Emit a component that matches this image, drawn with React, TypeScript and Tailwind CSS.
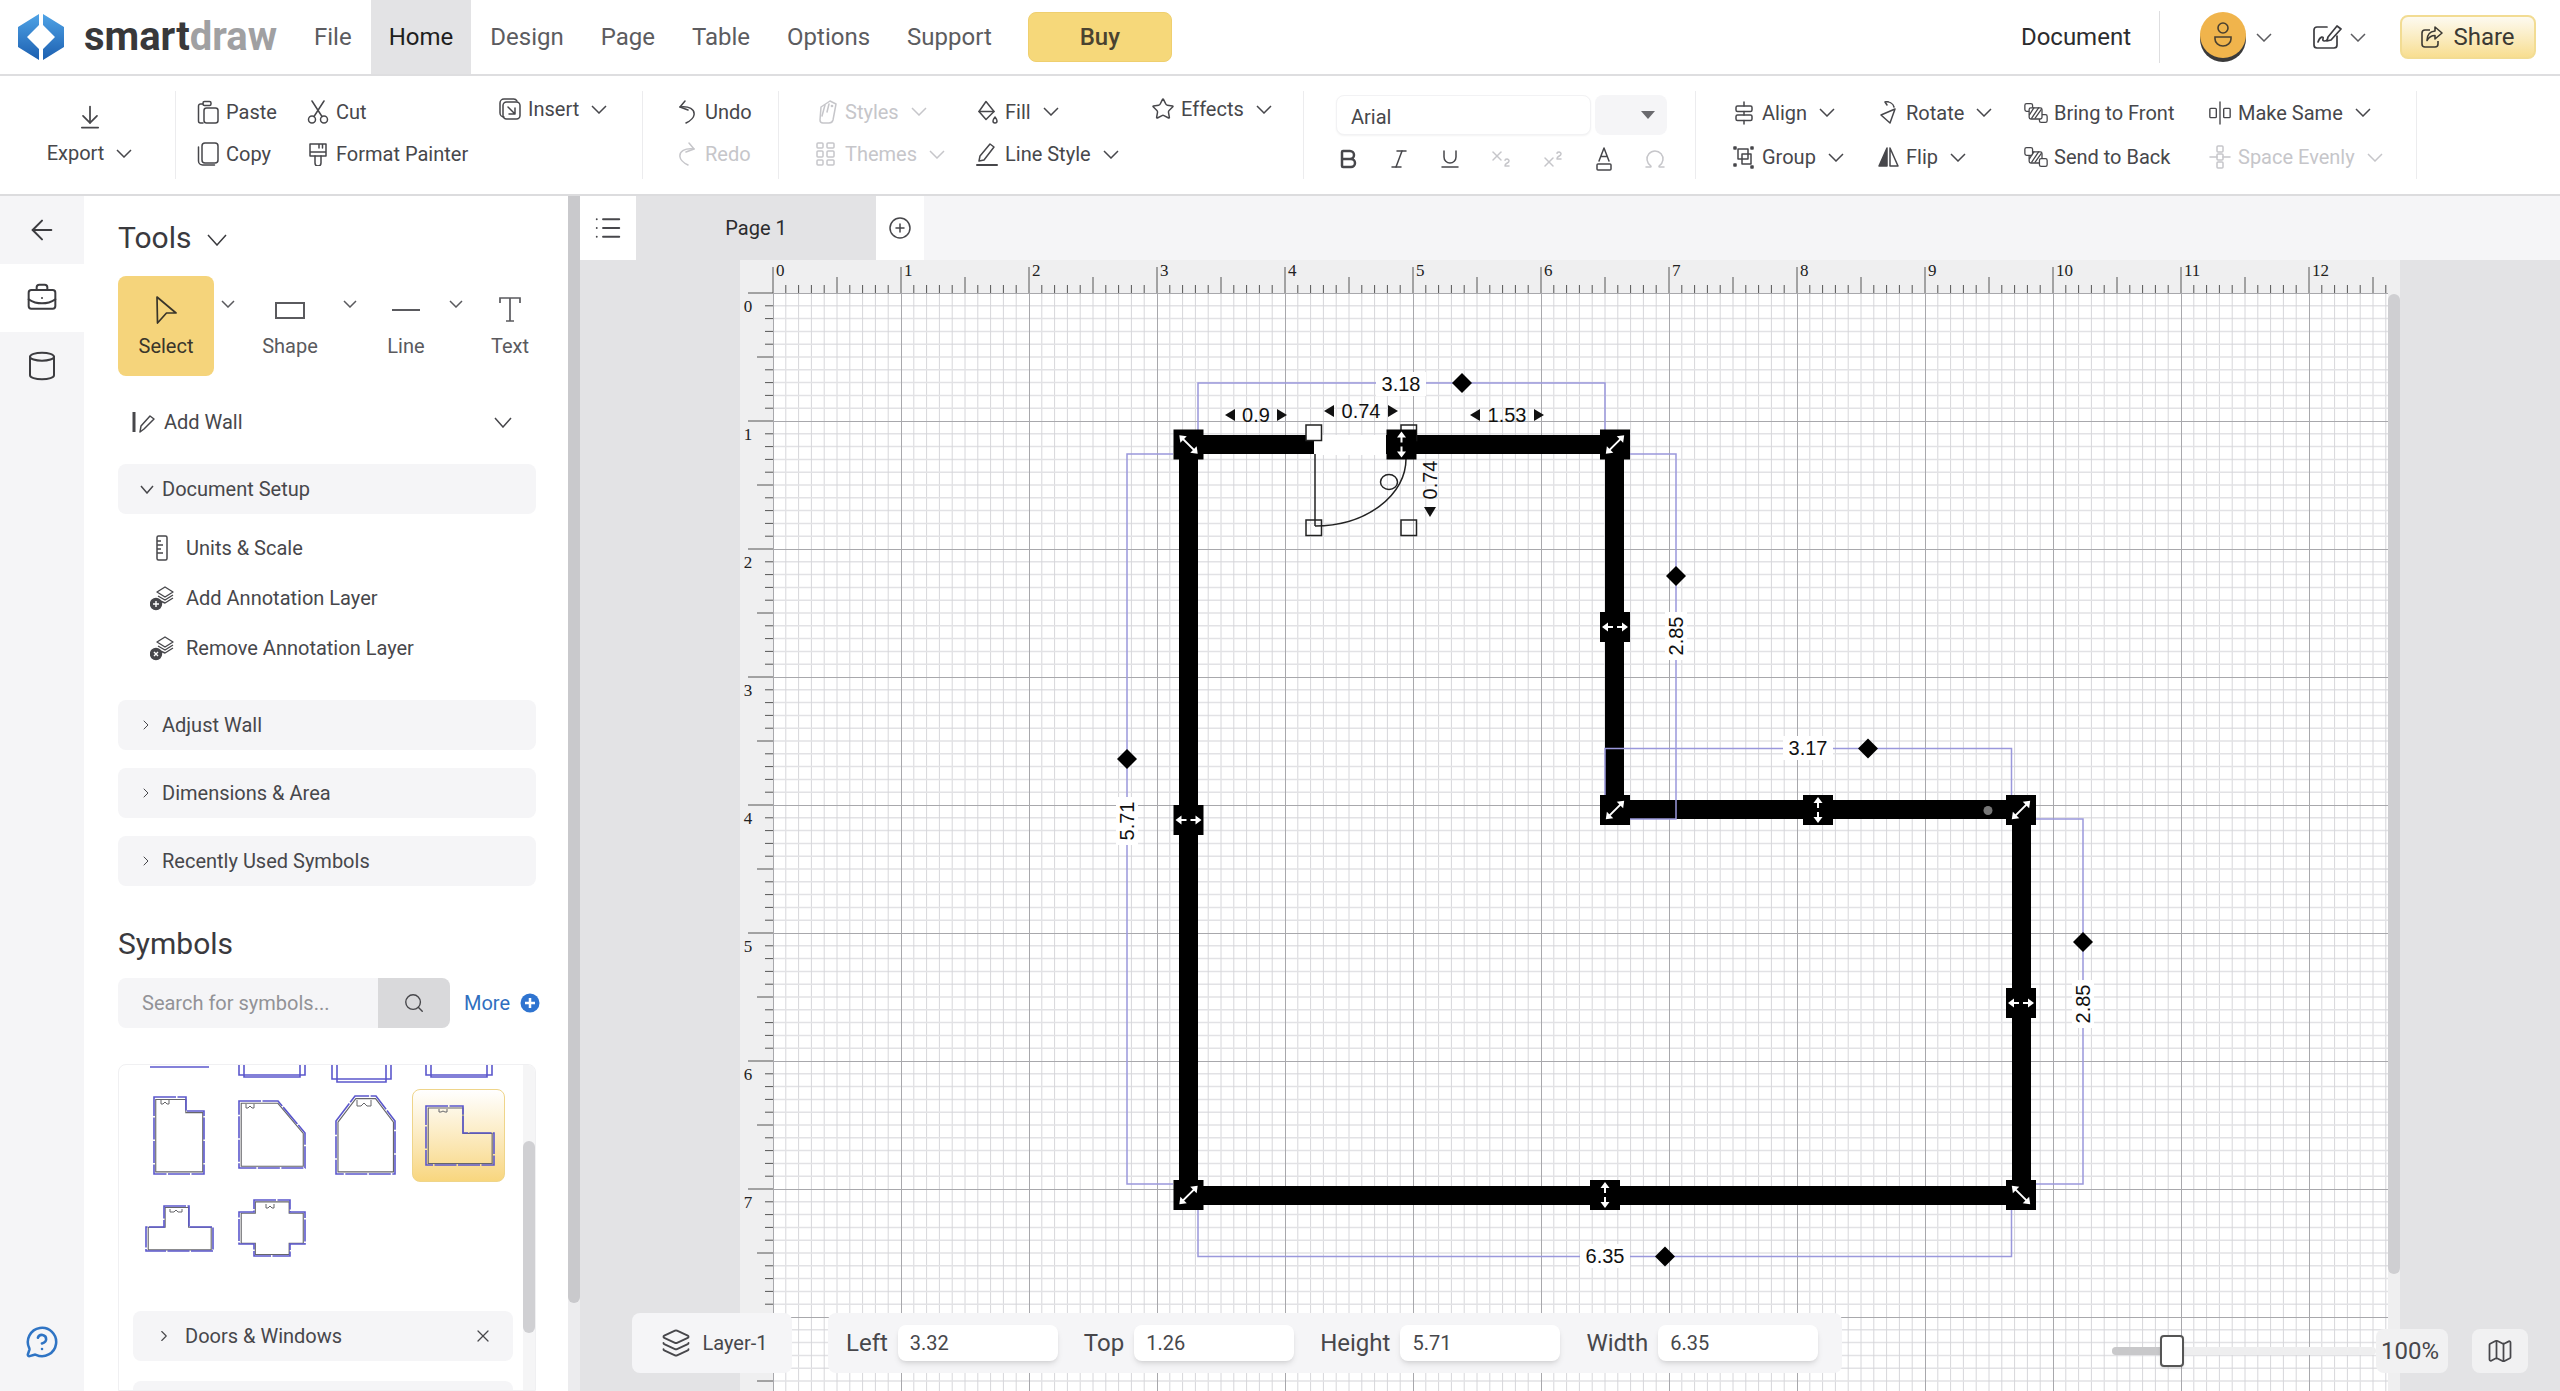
import type { ReactNode } from 'react'
import {
  ArrowDownToLine,
  ArrowLeft,
  Bold,
  BriefcaseBusiness,
  ChevronRight,
  CirclePlus,
  Cylinder,
  Italic,
  Layers,
  List,
  Map as MapIcon,
  MessageCircleQuestion,
  Omega,
  Search,
  Star,
  Subscript,
  Superscript,
  Underline,
  X,
} from 'lucide-react'

const BLUE = '#9a98dc'

function Logo() {
  return (
    <svg width="46" height="46" viewBox="0 0 46 46" className="flex-none">
      <defs>
        <linearGradient id="lg" x1="0" y1="0" x2="0" y2="1">
          <stop offset="0" stopColor="#4fa3e6" />
          <stop offset="1" stopColor="#1c5fb0" />
        </linearGradient>
      </defs>
      <polygon points="21,0 21,11 9,23 21,35 21,46 0,33 0,13" fill="url(#lg)" />
      <polygon points="25,0 25,11 37,23 25,35 25,46 46,33 46,13" fill="url(#lg)" />
    </svg>
  )
}

function Caret({ w = 16, h = 9, className = '' }: { w?: number; h?: number; className?: string }) {
  return (
    <svg width={w} height={h} viewBox={`0 0 ${w} ${h}`} fill="none" stroke="currentColor" strokeWidth="1.5" className={`flex-none ${className}`}>
      <path d={`M1 1L${w / 2} ${h - 1}L${w - 1} 1`} />
    </svg>
  )
}

function Ico({ w = 24, children }: { w?: number; children: ReactNode }) {
  return (
    <svg width={w} height="24" viewBox={`0 0 ${w} 24`} fill="none" stroke="currentColor" strokeWidth="1.5" strokeLinejoin="round" strokeLinecap="round">
      {children}
    </svg>
  )
}

const icons = {
  paste: (
    <Ico>
      <path d="M7 4H4.5a2 2 0 0 0-2 2v15a2 2 0 0 0 2 2H7" />
      <rect x="7" y="1.5" width="8" height="4" rx="1.5" />
      <rect x="8" y="8" width="14" height="15" rx="2.5" />
    </Ico>
  ),
  copy: (
    <Ico>
      <rect x="6" y="1" width="16" height="20" rx="3" />
      <path d="M2.5 5v14a4 4 0 0 0 4 4h12" />
    </Ico>
  ),
  cut: (
    <Ico>
      <circle cx="6" cy="19.5" r="3.5" />
      <circle cx="18" cy="19.5" r="3.5" />
      <path d="M8 16.5L18 1M16 16.5L6 1" />
    </Ico>
  ),
  painter: (
    <Ico>
      <path d="M4 2h16v12H4zM4 10h16M13 2v4M16.5 2v4" />
      <path d="M9 14v7a3 3 0 0 0 6 0v-7" />
    </Ico>
  ),
  insert: (
    <Ico>
      <path d="M6 20a4 4 0 0 1-4-4V6a4 4 0 0 1 4-4h9a4 4 0 0 1 4 2" />
      <rect x="5" y="5" width="17" height="17" rx="3.5" />
      <path d="M10 10l7 7M17 11v6h-6" />
    </Ico>
  ),
  undo: (
    <Ico>
      <path d="M10 1L5 7l8 3" />
      <path d="M5 7c9-1 15 2 14 8-.5 4-4 6-8 8" />
    </Ico>
  ),
  redo: (
    <Ico>
      <path d="M14 1l5 6-8 3" />
      <path d="M19 7C10 6 4 9 5 15c.5 4 4 6 8 8" />
    </Ico>
  ),
  styles: (
    <Ico>
      <path d="M6 7l9-6 6 3-3 16c-.5 2-2 3-4 3H8c-2 0-3-1-3-3z" />
      <path d="M10 5L7 16M14 4l-2 8" />
      <circle cx="17" cy="6" r=".6" />
    </Ico>
  ),
  themes: (
    <Ico>
      <rect x="2" y="9" width="6" height="6" rx="1" />
      <rect x="12" y="1" width="7" height="5" rx="1" />
      <rect x="12" y="9" width="7" height="6" rx="1" />
      <rect x="12" y="18" width="7" height="5" rx="1" />
      <rect x="2" y="1" width="6" height="5" rx="1" />
      <rect x="2" y="18" width="6" height="5" rx="1" />
    </Ico>
  ),
  fill: (
    <Ico>
      <path d="M11 1.5l8 10-8 8-7-8z" />
      <path d="M4 11.5h15" />
      <path d="M20 17c-1.500 2-2 3-2 4a2 2 0 0 0 4 0c0-1-.5-2-2-4z" />
    </Ico>
  ),
  lineStyle: (
    <Ico>
      <path d="M5 14L15 2l4 3L9 18l-5 1z" />
      <path d="M2 23h20" strokeWidth="2" />
    </Ico>
  ),
  fontColor: (
    <Ico>
      <path d="M7 14L12 1l5 13M9 9.5h6" />
      <rect x="5" y="17" width="14" height="6" rx="1" />
    </Ico>
  ),
  align: (
    <Ico>
      <rect x="4" y="5" width="16" height="5.5" rx="1.5" />
      <rect x="4" y="14" width="16" height="5.5" rx="1.5" />
      <path d="M12 1v4M12 10.5V14M12 19.5V23" />
    </Ico>
  ),
  group: (
    <Ico>
      <rect x="6" y="4" width="10" height="10" />
      <rect x="10" y="9" width="9" height="10" />
      <path d="M2 2h2v2H2zM19 2h2v2h-2zM2 19h2v2H2zM19 21h2v2h-2z" fill="currentColor" />
    </Ico>
  ),
  rotate: (
    <Ico>
      <path d="M19 8L5 14l9 8z" />
      <path d="M9 1c4-.5 8 1 9 5M9 1l3-1M9 1l2 3" />
    </Ico>
  ),
  flip: (
    <Ico>
      <path d="M11 3v18H3z" fill="currentColor" />
      <path d="M14 3v18h8z" />
    </Ico>
  ),
  front: (
    <Ico w={28}>
      <rect x="1" y="1" width="9" height="9" rx="2" />
      <rect x="18" y="14" width="9" height="9" rx="2" />
      <rect x="6" y="6" width="15" height="13" rx="2" fill="#fff" />
      <path d="M9 18l8-12M13 18l7-10M6.5 14l5-8" />
    </Ico>
  ),
  back: (
    <Ico w={28}>
      <rect x="6" y="6" width="15" height="13" rx="2" />
      <path d="M9 18l8-12M13 18l7-10M6.5 14l5-8" />
      <rect x="1" y="1" width="9" height="9" rx="2" fill="#fff" />
      <rect x="18" y="14" width="9" height="9" rx="2" fill="#fff" />
    </Ico>
  ),
  same: (
    <Ico w={26}>
      <path d="M13 0v24" />
      <rect x="2" y="7" width="7" height="10" rx="1" />
      <rect x="17" y="7" width="7" height="10" rx="1" />
    </Ico>
  ),
  evenly: (
    <Ico>
      <rect x="9" y="1" width="6" height="6" rx="1" />
      <rect x="9" y="17" width="6" height="6" rx="1" />
      <rect x="9" y="9" width="6" height="6" rx="1" />
      <path d="M2 12h7M15 12h7" />
    </Ico>
  ),
}

function Item({ icon, label, caret, off }: { icon: ReactNode; label: string; caret?: boolean; off?: boolean }) {
  return (
    <div className={`flex h-11 items-center gap-1.5 text-xl whitespace-nowrap ${off ? 'text-[#c6c6ca]' : 'text-[#47474b]'}`}>
      <span className="flex w-6 flex-none justify-center">{icon}</span>
      <span>{label}</span>
      {caret && <Caret className="ml-1.5" />}
    </div>
  )
}

function Col({ className, children }: { className: string; children: ReactNode }) {
  return <div className={`flex flex-none flex-col justify-center gap-px ${className}`}>{children}</div>
}

function Header() {
  const nav = ['File', 'Home', 'Design', 'Page', 'Table', 'Options', 'Support']
  return (
    <header className="flex h-19 flex-none items-stretch border-b-2 border-[#dedee0] bg-white">
      <div className="flex w-74 flex-none items-center pl-4.5">
        <Logo />
        <span className="ml-5 text-[40px] leading-none font-bold text-[#38383a]">
          smart<span className="text-[#a0a0a2]">draw</span>
        </span>
      </div>
      <nav className="flex gap-px">
        {nav.map((n) => (
          <div
            key={n}
            className={`flex items-center px-4.5 text-2xl ${n === 'Home' ? 'bg-[#e3e3e5] text-[#1e1e20]' : 'text-[#5c5c60]'}`}
          >
            {n}
          </div>
        ))}
      </nav>
      <button className="my-3 ml-4.5 flex w-36 items-center justify-center rounded-lg border border-[#efcf6f] bg-[#f6d87a] text-2xl font-medium text-[#4a4330]">
        Buy
      </button>
      <div className="ml-auto flex items-center pr-6 text-[#5c5c60]">
        <span className="text-2xl text-[#2c2c2e]">Document</span>
        <span className="mr-10 ml-7 h-13 w-px bg-[#dedee0]" />
        <div className="flex size-11.5 -translate-y-0.5 items-center justify-center rounded-full bg-[#f0b44c] shadow-[0_4px_0_#3a3a3a]">
          <svg width="20" height="28" viewBox="0 0 20 28" fill="none" stroke="#4a4030" strokeWidth="1.6">
            <circle cx="10" cy="7" r="5" />
            <path d="M2 16h16v2a8 7 0 0 1-16 0z" />
          </svg>
        </div>
        <Caret className="ml-2.5" />
        <svg width="30" height="26" viewBox="0 0 30 26" fill="none" stroke="#3c3c40" strokeWidth="1.7" strokeLinejoin="round" strokeLinecap="round" className="ml-10">
          <path d="M15 3H5a3 3 0 0 0-3 3v15a3 3 0 0 0 3 3h17a3 3 0 0 0 3-3v-9" />
          <path d="M16 13l9-11 4 3-10 11-4 1z" />
          <path d="M6 18c2-6 6-6 5-3s3 2 4 1" />
        </svg>
        <Caret className="ml-2" />
        <button className="ml-8.5 flex h-11 w-34 items-center justify-center gap-2.5 rounded-lg border-2 border-[#f2dc93] bg-gradient-to-b from-[#fdfaf0] to-[#f8de90] text-2xl text-[#3c3a34]">
          <svg width="22" height="22" viewBox="0 0 22 22" fill="none" stroke="#3c3a34" strokeWidth="1.6" strokeLinejoin="round">
            <path d="M9 4H4a3 3 0 0 0-3 3v11a3 3 0 0 0 3 3h10a3 3 0 0 0 3-3v-3" />
            <path d="M14 1l7 6-7 6V9.5c-4 0-6 1.500-8 5 0-6 3-9 8-9.500z" />
          </svg>
          Share
        </button>
      </div>
    </header>
  )
}

function Toolbar() {
  return (
    <div className="flex h-30 flex-none items-center border-b-2 border-[#dcdcde] bg-white">
      <div className="flex h-22 w-44 flex-none flex-col items-center border-r border-[#ececee] pt-3 pl-1 text-xl text-[#47474b]">
        <ArrowDownToLine size={28} strokeWidth={1.5} />
        <div className="mt-2 flex items-center gap-3">
          Export
          <Caret />
        </div>
      </div>
      <div className="flex h-22 flex-none border-r border-[#ececee] pb-1 pl-5">
        <Col className="w-28">
          <Item icon={icons.paste} label="Paste" />
          <Item icon={icons.copy} label="Copy" />
        </Col>
        <Col className="-ml-0.5 w-48">
          <Item icon={icons.cut} label="Cut" />
          <Item icon={icons.painter} label="Format Painter" />
        </Col>
        <Col className="-mt-1 w-36 justify-start">
          <Item icon={icons.insert} label="Insert" caret />
        </Col>
      </div>
      <div className="flex h-22 w-34 flex-none border-r border-[#ececee] pb-1 pl-8">
        <Col className="w-24">
          <Item icon={icons.undo} label="Undo" />
          <Item icon={icons.redo} label="Redo" off />
        </Col>
      </div>
      <div className="flex h-22 flex-none border-r border-[#ececee] pb-1 pl-9">
        <Col className="w-40">
          <Item icon={icons.styles} label="Styles" caret off />
          <Item icon={icons.themes} label="Themes" caret off />
        </Col>
        <Col className="w-44">
          <Item icon={icons.fill} label="Fill" caret />
          <Item icon={icons.lineStyle} label="Line Style" caret />
        </Col>
        <Col className="-mt-1 w-38 justify-start">
          <Item icon={<Star size={24} strokeWidth={1.5} />} label="Effects" caret />
        </Col>
      </div>
      <div className="flex h-22 w-98 flex-none flex-col border-r border-[#ececee] pt-1 pr-7 pl-8">
        <div className="flex gap-1">
          <div className="flex h-10 w-64 items-center rounded-lg border border-[#f2f2f4] bg-white px-3.5 pt-1 text-xl text-[#47474b] shadow-xs">
            Arial
          </div>
          <div className="flex h-10 w-18 items-center justify-end rounded-lg bg-[#f5f5f7] pr-3">
            <svg width="14" height="8" viewBox="0 0 14 8">
              <polygon points="0,0 14,0 7,8" fill="#6a6a6e" />
            </svg>
          </div>
        </div>
        <div className="mt-3 flex justify-between text-[#47474b]">
          <Bold size={24} strokeWidth={2.5} />
          <Italic size={24} strokeWidth={1.5} />
          <Underline size={24} strokeWidth={1.5} />
          <Subscript size={24} strokeWidth={1.5} className="text-[#c6c6ca]" />
          <Superscript size={24} strokeWidth={1.5} className="text-[#c6c6ca]" />
          {icons.fontColor}
          <Omega size={24} strokeWidth={1.5} className="text-[#c6c6ca]" />
        </div>
      </div>
      <div className="flex h-22 w-[721px] flex-none border-r border-[#ececee] pl-9">
        <Col className="w-36">
          <Item icon={icons.align} label="Align" caret />
          <Item icon={icons.group} label="Group" caret />
        </Col>
        <Col className="w-36">
          <Item icon={icons.rotate} label="Rotate" caret />
          <Item icon={icons.flip} label="Flip" caret />
        </Col>
        <Col className="w-44 pl-1">
          <Item icon={icons.front} label="Bring to Front" />
          <Item icon={icons.back} label="Send to Back" />
        </Col>
        <Col className="pl-3">
          <Item icon={icons.same} label="Make Same" caret />
          <Item icon={icons.evenly} label="Space Evenly" caret off />
        </Col>
      </div>
    </div>
  )
}

function Rail() {
  return (
    <aside className="flex w-21 flex-none flex-col bg-[#f5f5f7] text-[#3c3c40]">
      <div className="flex h-17 items-center justify-center">
        <ArrowLeft size={32} strokeWidth={1.5} />
      </div>
      <div className="flex h-17 items-center justify-center bg-white">
        <BriefcaseBusiness size={32} strokeWidth={1.5} />
      </div>
      <div className="flex h-17 items-center justify-center">
        <Cylinder size={32} strokeWidth={1.5} />
      </div>
      <div className="mt-auto mb-8 flex justify-center text-[#2f74c4]">
        <MessageCircleQuestion size={34} strokeWidth={1.8} />
      </div>
    </aside>
  )
}

function LayerIcon({ mark }: { mark: 'plus' | 'x' }) {
  return (
    <svg width="24" height="26" viewBox="0 0 24 26" fill="none" stroke="#47474b" strokeWidth="1.4" strokeLinejoin="round">
      <path d="M15 2l8 5-8 5-8-5z" />
      <path d="M8 11l7 4 8-5M8 15l7 3 8-5" />
      <circle cx="6" cy="19" r="5.5" fill="#47474b" />
      {mark === 'plus' ? (
        <path d="M3 19h6M6 16v6" stroke="#fff" />
      ) : (
        <path d="M4 17l4 4M8 17l-4 4" stroke="#fff" />
      )}
    </svg>
  )
}

function Section({ title }: { title: string }) {
  return (
    <div className="flex h-12.5 items-center gap-2 rounded-lg bg-[#f5f5f7] pl-5 text-xl text-[#47474b]">
      <ChevronRight size={16} strokeWidth={1.5} />
      {title}
    </div>
  )
}

const SHAPES = [
  { pts: '21,8 53,8 53,22 71,22 71,85 21,85', door: 'M28 11v4h2l2-2 2 2h2v-4' },
  { pts: '13,12 52,12 79,44 79,79 13,79', door: 'M20 15v4h2l2-2 2 2h2v-4' },
  { pts: '17,32 36,7 57,7 76,32 76,85 17,85', door: 'M38 11v6h4l3-3 3 3h4v-6' },
  { pts: '13,16 50,16 50,43 81,43 81,75 13,75', door: 'M26 19v3h2l2-1 2 1h2v-3' },
  { pts: '31,24 56,24 56,45 80,45 80,69 13,69 13,45 31,45', door: 'M37 27v3h4l2-2 2 2h4v-3' },
  { pts: '28,18 64,18 64,30 79,30 79,62 64,62 64,74 28,74 28,62 13,62 13,30 28,30', door: 'M40 22v4h2l2-2 2 2h2v-4' },
]

function SymbolIcon({ points, door }: { points: string; door: string }) {
  return (
    <svg width="93" height="93" viewBox="0 0 93 93" fill="none">
      <polygon points={points} stroke="#66666a" strokeWidth="1.2" transform="translate(3 3) scale(.94)" />
      <path d={door} stroke="#66666a" strokeWidth="1" />
      <polygon points={points} stroke="#5b57cc" strokeWidth="1.6" strokeDasharray="22 1.5" />
    </svg>
  )
}

function Sidebar() {
  return (
    <aside className="flex w-[496px] flex-none overflow-hidden bg-white">
      <div className="flex min-w-0 flex-1 flex-col pt-6 pr-8 pl-8.5">
        <div className="flex h-9 items-center gap-4 text-3xl text-[#3a3a3e]">
          Tools
          <Caret w={20} h={12} className="mt-1" />
        </div>
        <div className="mt-5 flex h-25 flex-none text-xl text-[#5a5a5e]">
          <div className="flex w-24 flex-none flex-col items-center rounded-lg bg-[#f5d47b] pt-5 text-[#39352a]">
            <svg width="24" height="28" viewBox="0 0 24 28" fill="none" stroke="currentColor" strokeWidth="1.7" strokeLinejoin="round">
              <path d="M3 1L22 17H12.5L3.500 27z" />
            </svg>
            <span className="mt-2">Select</span>
          </div>
          <div className="flex w-7 flex-none justify-center pt-6">
            <Caret w={14} h={8} />
          </div>
          <div className="flex w-24 flex-none flex-col items-center pt-5">
            <svg width="30" height="28" viewBox="0 0 30 28" fill="none" stroke="currentColor" strokeWidth="2">
              <rect x="1" y="7" width="28" height="15" />
            </svg>
            <span className="mt-2">Shape</span>
          </div>
          <div className="flex w-6 flex-none justify-center pt-6">
            <Caret w={14} h={8} />
          </div>
          <div className="flex w-22 flex-none flex-col items-center pt-5">
            <svg width="30" height="28" viewBox="0 0 30 28" fill="none" stroke="currentColor" strokeWidth="2">
              <path d="M1 14h28" />
            </svg>
            <span className="mt-2">Line</span>
          </div>
          <div className="flex w-3 flex-none justify-center pt-6">
            <Caret w={14} h={8} />
          </div>
          <div className="flex w-24 flex-none flex-col items-center pt-5">
            <svg width="24" height="28" viewBox="0 0 24 28" fill="none" stroke="currentColor" strokeWidth="1.7">
              <path d="M2 7V2h20v5M12 2v23M8 25h8" />
            </svg>
            <span className="mt-2">Text</span>
          </div>
        </div>
        <div className="mt-6 flex h-11 flex-none items-center gap-2 pl-3.5 text-xl text-[#47474b]">
          <svg width="24" height="24" viewBox="0 0 24 24" fill="none" stroke="#47474b" strokeWidth="1.5">
            <path d="M2 2v20" strokeWidth="3" />
            <path d="M8 22l1-6L18 6l4 3-10 10z" strokeLinejoin="round" />
          </svg>
          Add Wall
          <Caret w={18} h={11} className="mr-6 ml-auto" />
        </div>
        <div className="mt-5 flex h-12.5 flex-none items-center gap-2 rounded-lg bg-[#f5f5f7] pl-5.5 text-xl text-[#47474b]">
          <Caret w={14} h={9} />
          Document Setup
        </div>
        <div className="mt-2.5 flex flex-none flex-col gap-0.5 pl-8 text-xl text-[#47474b]">
          <div className="flex h-12 items-center gap-3">
            <svg width="24" height="26" viewBox="0 0 24 26" fill="none" stroke="#47474b" strokeWidth="1.5">
              <rect x="7" y="1" width="10" height="24" rx="1.5" />
              <path d="M7 6h4M7 10h6M7 14h4M7 18h6" />
            </svg>
            Units &amp; Scale
          </div>
          <div className="flex h-12 items-center gap-3">
            <LayerIcon mark="plus" />
            Add Annotation Layer
          </div>
          <div className="flex h-12 items-center gap-3">
            <LayerIcon mark="x" />
            Remove Annotation Layer
          </div>
        </div>
        <div className="mt-7 flex flex-none flex-col gap-4.5">
          <Section title="Adjust Wall" />
          <Section title="Dimensions & Area" />
          <Section title="Recently Used Symbols" />
        </div>
        <div className="mt-10 h-9 flex-none text-3xl text-[#3a3a3e]">Symbols</div>
        <div className="mt-4 flex h-12.5 flex-none items-center">
          <div className="flex h-full w-65 flex-none items-center rounded-l-lg bg-[#f5f5f7] pl-6 text-xl text-[#929296]">
            Search for symbols...
          </div>
          <div className="flex h-full w-18 flex-none items-center justify-center rounded-r-lg bg-[#d9d9db]">
            <Search size={22} strokeWidth={1.5} className="text-[#47474b]" />
          </div>
          <span className="ml-3.5 text-xl text-[#2f6fc0]">More</span>
          <svg width="20" height="20" viewBox="0 0 20 20" className="ml-2.5 flex-none">
            <circle cx="10" cy="10" r="9.5" fill="#2f74d0" />
            <path d="M10 5v10M5 10h10" stroke="#fff" strokeWidth="2.5" />
          </svg>
        </div>
        <div className="mt-9 flex min-h-0 flex-1 overflow-hidden rounded-t-lg border border-[#f0f0f2]">
          <div className="min-w-0 flex-1 pl-3.5">
            <svg width="372" height="24" viewBox="0 0 372 24" fill="none" stroke="#5b57cc" strokeWidth="1.6">
              <path d="M17 2h59" />
              <path d="M106 0v10h66V0M111 0v12h56V0" />
              <path d="M199 0v14h59V0M204 0v17h49V0" />
              <path d="M293 0v10h66V0M298 0v12h56V0" />
            </svg>
            <div className="grid w-[372px] grid-cols-4">
              {SHAPES.map((s, i) => (
                <div
                  key={s.pts}
                  className={`h-[93px] ${i === 3 ? 'rounded-lg border border-[#efd58a] bg-gradient-to-b from-white to-[#f8d67e]' : ''}`}
                >
                  <SymbolIcon points={s.pts} door={s.door} />
                </div>
              ))}
            </div>
            <div className="mt-9 mr-2.5 flex h-12.5 items-center rounded-lg bg-[#f5f5f7] pr-5 pl-5.5 text-xl text-[#47474b]">
              <ChevronRight size={18} strokeWidth={1.5} />
              <span className="ml-3">Doors &amp; Windows</span>
              <X size={20} strokeWidth={1.5} className="ml-auto" />
            </div>
            <div className="mt-5 mr-2.5 h-12.5 rounded-lg bg-[#f5f5f7]" />
          </div>
          <div className="flex w-3 flex-none flex-col bg-[#f5f5f6] pt-19">
            <div className="h-48 flex-none rounded-full bg-[#d0d0d3]" />
          </div>
        </div>
      </div>
      <div className="flex w-3 flex-none flex-col bg-[#ececee]">
        <div className="mb-22 flex-1 rounded-b-full bg-[#c9c9cc]" />
      </div>
    </aside>
  )
}

const range = (n: number) => Array.from({ length: n }, (_, i) => i)

function Handle({ x, y, a }: { x: number; y: number; a: number }) {
  const stem = a % 90 === 0 ? 'M-9 0H-2M2 0H9' : 'M-8 0H8'
  return (
    <g transform={`translate(${x} ${y})`}>
      <rect x="-15" y="-15" width="30" height="30" fill="#000" />
      <g transform={`rotate(${a})`} stroke="#fff" strokeWidth="2" fill="#fff">
        <path d={stem} />
        <polygon points="-13,0 -7,-4.500 -7,4.500" stroke="none" />
        <polygon points="13,0 7,-4.500 7,4.500" stroke="none" />
      </g>
    </g>
  )
}

function Diamond({ x, y }: { x: number; y: number }) {
  return <polygon points={`${x},${y - 10} ${x + 10},${y} ${x},${y + 10} ${x - 10},${y}`} fill="#000" />
}

function DimH({ x, y, t, w = 50 }: { x: number; y: number; t: string; w?: number }) {
  return (
    <g>
      <rect x={x - w / 2} y={y - 12} width={w} height="24" fill="#fff" />
      <text x={x} y={y + 7} textAnchor="middle" fontSize="20" fontFamily="Liberation Sans" fill="#111">
        {t}
      </text>
    </g>
  )
}

function DimV({ x, y, t }: { x: number; y: number; t: string }) {
  return (
    <g transform={`rotate(-90 ${x} ${y})`}>
      <rect x={x - 24} y={y - 11} width="48" height="22" fill="#fff" />
      <text x={x} y={y + 7} textAnchor="middle" fontSize="20" fontFamily="Liberation Sans" fill="#111">
        {t}
      </text>
    </g>
  )
}

function Arrowed({ x, y, t, w }: { x: number; y: number; t: string; w: number }) {
  return (
    <g fill="#111">
      <polygon points={`${x - w},${y} ${x - w + 10},${y - 6} ${x - w + 10},${y + 6}`} />
      <polygon points={`${x + w},${y} ${x + w - 10},${y - 6} ${x + w - 10},${y + 6}`} />
      <text x={x} y={y + 7} textAnchor="middle" fontSize="20" fontFamily="Liberation Sans">
        {t}
      </text>
    </g>
  )
}

function Canvas() {
  return (
    <svg viewBox="740 260 1648 1131" className="h-full min-w-0 flex-1">
      <defs>
        <pattern id="grid" x="773" y="293" width="128" height="128" patternUnits="userSpaceOnUse">
          {range(10).map((i) => (
            <g key={i}>
              <path d={`M0 ${i * 12.8}H128`} stroke="#e2e2e5" strokeWidth="1.5" />
              <path d={`M${i * 12.8} 0V128`} stroke="#d6d6da" strokeWidth="1" />
            </g>
          ))}
          <path d="M0 0.5H128M0.5 0V128" stroke="#a8a8ac" strokeWidth="1" />
        </pattern>
      </defs>
      <rect x="740" y="260" width="1648" height="1131" fill="#efeff0" />
      <rect x="773" y="293" width="1615" height="1098" fill="#fff" />
      <rect x="773" y="293" width="1615" height="1098" fill="url(#grid)" />

      {range(127).map((i) => {
        const x = 773 + i * 12.8
        const top = i % 10 === 0 ? 267 : i % 5 === 0 ? 277 : 285
        return <path key={i} d={`M${x} ${top}V293`} stroke="#555" strokeWidth="1" />
      })}
      {range(87).map((i) => {
        const y = 293 + i * 12.8
        const left = i % 10 === 0 ? 748 : i % 5 === 0 ? 757 : 765
        return <path key={i} d={`M${left} ${y}H773`} stroke="#555" strokeWidth="1" />
      })}
      {range(13).map((i) => (
        <text key={i} x={776 + i * 128} y={276} fontSize="17" fontFamily="Liberation Serif" fill="#222">
          {i}
        </text>
      ))}
      {range(8).map((i) => (
        <text key={i} x={748} y={312 + i * 128} fontSize="17" fontFamily="Liberation Serif" fill="#222" textAnchor="middle">
          {i}
        </text>
      ))}

      <g fill="#000">
        <rect x="1179" y="435" width="135" height="19" />
        <rect x="1386" y="435" width="238" height="19" />
        <rect x="1605" y="435" width="19" height="384" />
        <rect x="1605" y="800" width="426" height="19" />
        <rect x="2012" y="800" width="19" height="405" />
        <rect x="1179" y="1186" width="852" height="19" />
        <rect x="1179" y="435" width="19" height="770" />
      </g>
      <rect x="1314" y="435" width="72" height="20" fill="#fff" />

      <g fill="none" stroke={BLUE} strokeWidth="1.5">
        <path d="M1198 435V383H1605V435" />
        <path d="M1173 454H1127V1184H1173" />
        <path d="M1630 454H1676V819H1605" />
        <path d="M1605 800V748.5H2011.5V795" />
        <path d="M2036 819H2083V1184H2036" />
        <path d="M1198 1205V1256.5H2011.5V1205" />
      </g>

      <g fill="none" stroke="#222" strokeWidth="1.5">
        <path d="M1315 454V526" />
        <path d="M1315 526A91 67 0 0 0 1406 459" />
        <rect x="1306" y="425" width="15.5" height="15.5" fill="#fff" />
        <rect x="1306" y="520" width="15.5" height="15.5" />
        <rect x="1401" y="425" width="15.5" height="15.5" />
        <rect x="1401" y="520" width="15.5" height="15.5" />
        <ellipse cx="1389" cy="482" rx="8.5" ry="7.5" />
      </g>

      <Handle x={1188.5} y={444.5} a={45} />
      <Handle x={1615} y={444.5} a={-45} />
      <Handle x={1401.5} y={444.5} a={90} />
      <Handle x={1615} y={627} a={0} />
      <Handle x={1615} y={810} a={-45} />
      <Handle x={1818} y={810} a={90} />
      <Handle x={2021} y={810} a={-45} />
      <Handle x={2021} y={1003} a={0} />
      <Handle x={1188.5} y={820} a={0} />
      <Handle x={1188.5} y={1195} a={-45} />
      <Handle x={1605} y={1195} a={90} />
      <Handle x={2021} y={1195} a={45} />
      <circle cx="1988" cy="810.5" r="4.5" fill="#777" />

      <DimH x={1401} y={384} t="3.18" />
      <Diamond x={1462} y={383} />
      <DimH x={1808} y={748} t="3.17" />
      <Diamond x={1868} y={748.5} />
      <DimH x={1605} y={1256} t="6.35" />
      <Diamond x={1665} y={1256.5} />
      <DimV x={1127} y={821} t="5.71" />
      <Diamond x={1127} y={759} />
      <DimV x={1676} y={636} t="2.85" />
      <Diamond x={1676} y={576} />
      <DimV x={2083} y={1004} t="2.85" />
      <Diamond x={2083} y={942} />

      <Arrowed x={1256} y={415} t="0.9" w={31} />
      <Arrowed x={1361} y={411} t="0.74" w={37} />
      <Arrowed x={1507} y={415} t="1.53" w={37} />
      <g transform="rotate(-90 1430 480)">
        <text x="1430" y="487" textAnchor="middle" fontSize="20" fontFamily="Liberation Sans" fill="#111">
          0.74
        </text>
      </g>
      <polygon points="1430,517 1424,507 1436,507" fill="#111" />
    </svg>
  )
}

function Prop({ label, value }: { label: string; value: string }) {
  return (
    <div className="flex items-center gap-2.5">
      <span className="text-2xl text-[#47474b]">{label}</span>
      <div className="flex h-9 w-40 items-center rounded-lg bg-white pl-3 text-xl text-[#47474b] shadow-md">{value}</div>
    </div>
  )
}

function Main() {
  return (
    <main className="relative flex min-w-0 flex-1 flex-col bg-[#e3e3e5]">
      <div className="flex h-16 flex-none bg-[#f5f5f7]">
        <div className="flex w-14 items-center justify-center bg-white text-[#47474b]">
          <List size={30} strokeWidth={1.5} />
        </div>
        <div className="flex w-60 items-center justify-center bg-[#e3e3e5] text-xl text-[#2c2c2e]">Page 1</div>
        <div className="flex w-12 items-center justify-center bg-white text-[#47474b]">
          <CirclePlus size={24} strokeWidth={1.5} />
        </div>
      </div>
      <div className="mr-40 ml-40 flex min-h-0 flex-1">
        <Canvas />
        <div className="flex w-3 flex-none flex-col bg-[#efeff0] pt-8.5">
          <div className="h-245 rounded-full bg-[#cfcfd2]" />
        </div>
      </div>

      <div className="absolute bottom-4.5 left-13 flex h-15 gap-9">
        <div className="flex w-40 items-center justify-center gap-3 rounded-lg bg-[#f5f5f7] pl-1 text-xl text-[#47474b]">
          <Layers size={30} strokeWidth={1.5} />
          Layer-1
        </div>
        <div className="flex items-center gap-6.5 rounded-lg bg-[#f5f5f7] pr-6 pl-4.5">
          <Prop label="Left" value="3.32" />
          <Prop label="Top" value="1.26" />
          <Prop label="Height" value="5.71" />
          <Prop label="Width" value="6.35" />
        </div>
      </div>

      <div className="absolute right-8 bottom-4.5 flex items-center">
        <div className="relative h-2 w-66 rounded-full bg-[#eeeeef]">
          <div className="h-2 w-14 rounded-l-full bg-[#c8c8ca]" />
          <div className="absolute -top-3 left-12 h-8 w-6 rounded-sm border-2 border-[#555] bg-white shadow-sm" />
        </div>
        <div className="flex h-11 w-18 items-center justify-center rounded-lg bg-[#f1f1f2] pr-1 text-2xl text-[#47474b]">100%</div>
        <div className="ml-6 flex h-11 w-14 items-center justify-center rounded-lg bg-[#f1f1f2] text-[#47474b]">
          <MapIcon size={28} strokeWidth={1.5} />
        </div>
      </div>
    </main>
  )
}

export default function App() {
  return (
    <div className="flex h-screen w-screen flex-col overflow-hidden bg-white font-[Roboto,sans-serif]">
      <Header />
      <Toolbar />
      <div className="flex min-h-0 flex-1">
        <Rail />
        <Sidebar />
        <Main />
      </div>
    </div>
  )
}
